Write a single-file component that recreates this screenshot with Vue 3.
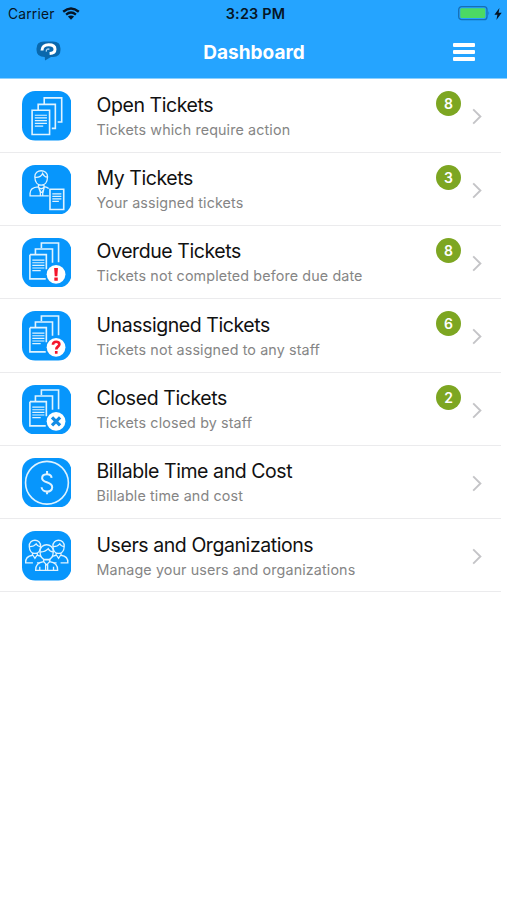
<script setup>
const items = [
  { icon: 'open', title: 'Open Tickets', note: 'Tickets which require action', count: 8 },
  { icon: 'mine', title: 'My Tickets', note: 'Your assigned tickets', count: 3 },
  { icon: 'overdue', title: 'Overdue Tickets', note: 'Tickets not completed before due date', count: 8 },
  { icon: 'unassigned', title: 'Unassigned Tickets', note: 'Tickets not assigned to any staff', count: 6 },
  { icon: 'closed', title: 'Closed Tickets', note: 'Tickets closed by staff', count: 2 },
  { icon: 'billing', title: 'Billable Time and Cost', note: 'Billable time and cost' },
  { icon: 'users', title: 'Users and Organizations', note: 'Manage your users and organizations' },
]
const flagged = ['overdue', 'unassigned', 'closed']
</script>

<template>
  <div class="screen">
    <header class="header">
      <div class="status">
        <div class="carrier">
          <span>Carrier</span>
          <svg class="wifi" viewBox="0 0 18 13">
            <path d="M1.2 4.7Q9 -1.7 16.8 4.7M4.1 7.6Q9 3.6 13.9 7.6" fill="none" stroke="#061525" stroke-width="2.4" />
            <path d="M5.9 9.6Q9 7.2 12.1 9.6L9 12.7Z" fill="#061525" />
          </svg>
        </div>
        <div class="time">3:23 PM</div>
        <div class="power">
          <svg class="battery" viewBox="0 0 33 15">
            <rect x=".7" y=".7" width="28.3" height="13" rx="3" fill="none" stroke="#176fb5" stroke-width="1.3" />
            <rect x="2.3" y="2.3" width="25" height="9.8" rx="1.3" fill="#4cd964" />
            <path d="M30.5 5q1.6 2.2 0 4.5z" fill="#176fb5" />
          </svg>
          <svg class="bolt" viewBox="0 0 8 12"><path d="M5.4 0L.4 6.8H3.4L2.4 12L7.7 4.8H4.6Z" fill="#061525" /></svg>
        </div>
      </div>
      <div class="nav">
        <svg class="logo" viewBox="0 0 25 20">
          <path d="M8 .5H17Q24.5 .5 24.5 7.5V9Q24.5 16 17 16H15L9 19.5L8.8 16Q.5 16 .5 9V7.5Q.5 .5 8 .5Z" fill="#0968ad" />
          <path d="M6 9.6C6 5.6 8.8 3.8 12.6 3.8C16.6 3.8 19 5.6 19 8.2C19 10.8 16.6 12.4 13.6 12.6" fill="none" stroke="#fff" stroke-width="3" />
          <path d="M10.4 10.6C9.8 8.4 12 7.4 13.4 8.4" fill="none" stroke="#a9d6f5" stroke-width="1.3" />
        </svg>
        <h1>Dashboard</h1>
        <div class="menu"><i></i><i></i><i></i></div>
      </div>
    </header>

    <main>
      <div v-for="item in items" :key="item.icon" class="row">
        <svg class="icon" viewBox="0 0 49 49">
          <rect width="49" height="49" rx="13" fill="#0796fc" />
          <g fill="none" stroke="#dff3ff" stroke-width="1.6">
            <template v-if="item.icon === 'open'">
              <path d="M10 19H27.3V43H10ZM16 18.5V13.2H33V37H29.5M22 12.5V6.8H39.3V30.7H35.3" />
              <path d="M12.7 24H24.7M12.7 26.7H24.7M12.7 29.4H24.7M12.7 32.1H24.7M12.7 34.8H21" stroke-width="1.2" />
            </template>
            <template v-else-if="item.icon === 'mine'">
              <path d="M12.7 11.7C12.5 3.7 25.4 3.7 25.3 11.7C25.2 17.1 22.4 20 19 20S12.8 17.1 12.7 11.7ZM13 12.2Q18.7 12.6 20.4 8.4Q21.8 11.7 25 12M16.3 19V22Q19 25 21.8 22V19M16 21.7Q8 22.2 8 28V30.5H26.5M22 21.5Q25 22 26.4 23.2M16.4 22L18.2 27L20.8 27L22 22M18.2 25V30.5M20.5 25V30.5" stroke-width="1.3" />
              <path d="M27.7 24H41.3V44H27.7Z" />
              <path d="M30 28.5H39M30 31H39M30 33.5H39M30 36H36.5" stroke-width="1.2" />
            </template>
            <template v-else-if="flagged.includes(item.icon)">
              <path d="M7.8 16.5H24.1V31M7.8 16.5V40.5H23.5M13.3 16V10.9H30.2V24.5M19.2 10V4.9H36.2V24" />
              <path d="M10.2 21.9H22.2M10.2 24.5H22.2M10.2 27.1H22.2M10.2 29.7H22.2M10.2 32.3H18.5" stroke-width="1.2" />
              <circle cx="33.7" cy="36" r="9.3" fill="#fff" stroke="none" />
              <path v-if="item.icon === 'overdue'" d="M31.8 29.6H35.6L35 37.8H32.4ZM32 39.2H35.4V42.4H32Z" fill="#f5142b" stroke="none" />
              <path v-else-if="item.icon === 'unassigned'" d="M30.6 33.5C30.7 29.4 37.1 29.5 37 33C36.9 35.3 33.9 35.3 33.9 38M33.9 39.5V42.2" stroke="#f5142b" stroke-width="2.6" />
              <path v-else d="M29.7 32L37.7 40M37.7 32L29.7 40" stroke="#128ce5" stroke-width="3.2" />
            </template>
            <template v-else-if="item.icon === 'billing'">
              <circle cx="24.7" cy="24.5" r="21.2" />
              <path d="M29.3 19.7C28.8 14.6 19.9 15.1 19.9 20C19.9 25.1 29.9 23 29.9 29C29.9 34.9 19.7 34.5 19.4 29M24.8 12.8V16.5M24.8 32.8V36" stroke-width="2" />
            </template>
            <g v-else stroke-width="1.3">
              <g v-for="x in [12.8, 36.2]" :key="x" :transform="`translate(${x} 15)`">
                <path d="M-5.6 .3C-6 -7.9 6 -7.9 5.6 .3C5.5 5 2.7 7.2 0 7.2S-5.5 5 -5.6 .3ZM-5 .5Q-1 .4 1.2 -2.3Q2.6 .1 5 .4M-2.4 6.5V9Q-9.6 10 -9.2 16.5H-2M2.4 6.5V9Q9.6 10 9.2 16.5H2M-2 9L0 12L2 9" />
              </g>
              <path d="M17.8 20.5C17.5 11.3 31.3 11.3 31 20.5C30.8 25.8 28 28.5 24.4 28.5S18 25.8 17.8 20.5ZM21.4 28V30.3Q13.2 31.5 13.5 38.9H35.3Q35.6 31.5 27.4 30.3V28Z" fill="#0796fc" />
              <path d="M18 20.8Q23 20.9 26 17.5Q27.5 20.4 30.8 20.6M21.4 30.3L24.4 33.5L27.4 30.3M23.4 33V38.5M25.4 33V38.5M17.6 35.5V38.5M31.2 35.5V38.5" />
            </g>
          </g>
        </svg>
        <div class="copy">
          <h2>{{ item.title }}</h2>
          <p>{{ item.note }}</p>
        </div>
        <span v-if="item.count" class="badge">{{ item.count }}</span>
        <svg class="chevron" viewBox="0 0 10 17"><path d="M1.2 1.4L8.4 8.5L1.2 15.6" fill="none" stroke="#c4c4c7" stroke-width="1.9" /></svg>
      </div>
    </main>
  </div>
</template>

<style>
body { margin: 0; background: #fff; }
</style>

<style scoped>
.screen { width: 507px; height: 900px; overflow: hidden; background: #fff; font-family: Inter, "Liberation Sans", sans-serif; color: #111; }
.header { box-sizing: border-box; height: 79.4px; background: #25a4ff; border-bottom: 1px solid #8bd0ff; }
.status { height: 27px; display: grid; grid-template-columns: 1fr auto 1fr; align-items: center; color: #061525; font-size: 13.8px; }
.carrier { display: flex; align-items: center; padding-left: 8px; gap: 7px; letter-spacing: .2px; }
.wifi { width: 18px; height: 13px; }
.time { font-weight: 600; font-size: 14.4px; letter-spacing: .2px; padding-left: 4px; }
.power { display: flex; justify-content: flex-end; align-items: center; gap: 3px; padding-right: 5.5px; }
.battery { width: 33px; height: 15px; }
.bolt { width: 8px; height: 12px; }
.nav { height: 51px; display: grid; grid-template-columns: 1fr auto 1fr; align-items: center; padding: 0 32px 0 36px; }
.logo { width: 25px; height: 20px; margin-top: -3px; }
h1 { margin: 0; color: #fff; font-size: 19px; font-weight: 700; line-height: 24px; letter-spacing: .02px; padding: 1px 3px 0 0; }
.menu { justify-self: end; display: grid; gap: 3px; width: 22px; margin-top: -2px; }
.menu i { height: 4px; border-radius: 1px; background: #fff; }
.row { box-sizing: border-box; width: 501px; height: 73.3px; display: flex; align-items: flex-start; padding: 12px 19px 0 21.5px; border-bottom: 1px solid #ebebed; }
.icon { width: 49.5px; height: 49.5px; flex: none; }
.copy { flex: 1; padding: 1.5px 0 0 25.5px; white-space: nowrap; }
h2 { margin: 0; font-weight: 400; font-size: 19.5px; line-height: 25px; letter-spacing: -.43px; }
p { margin: 0; padding-top: 1px; font-size: 14.3px; line-height: 21px; color: #858585; letter-spacing: .13px; }
.badge { width: 25px; height: 25px; border-radius: 50%; background: #7da622; color: #fff; font-weight: 600; font-size: 14px; line-height: 25px; text-align: center; margin-right: 11px; }
.chevron { width: 10px; height: 17px; margin-top: 17px; flex: none; }
</style>
